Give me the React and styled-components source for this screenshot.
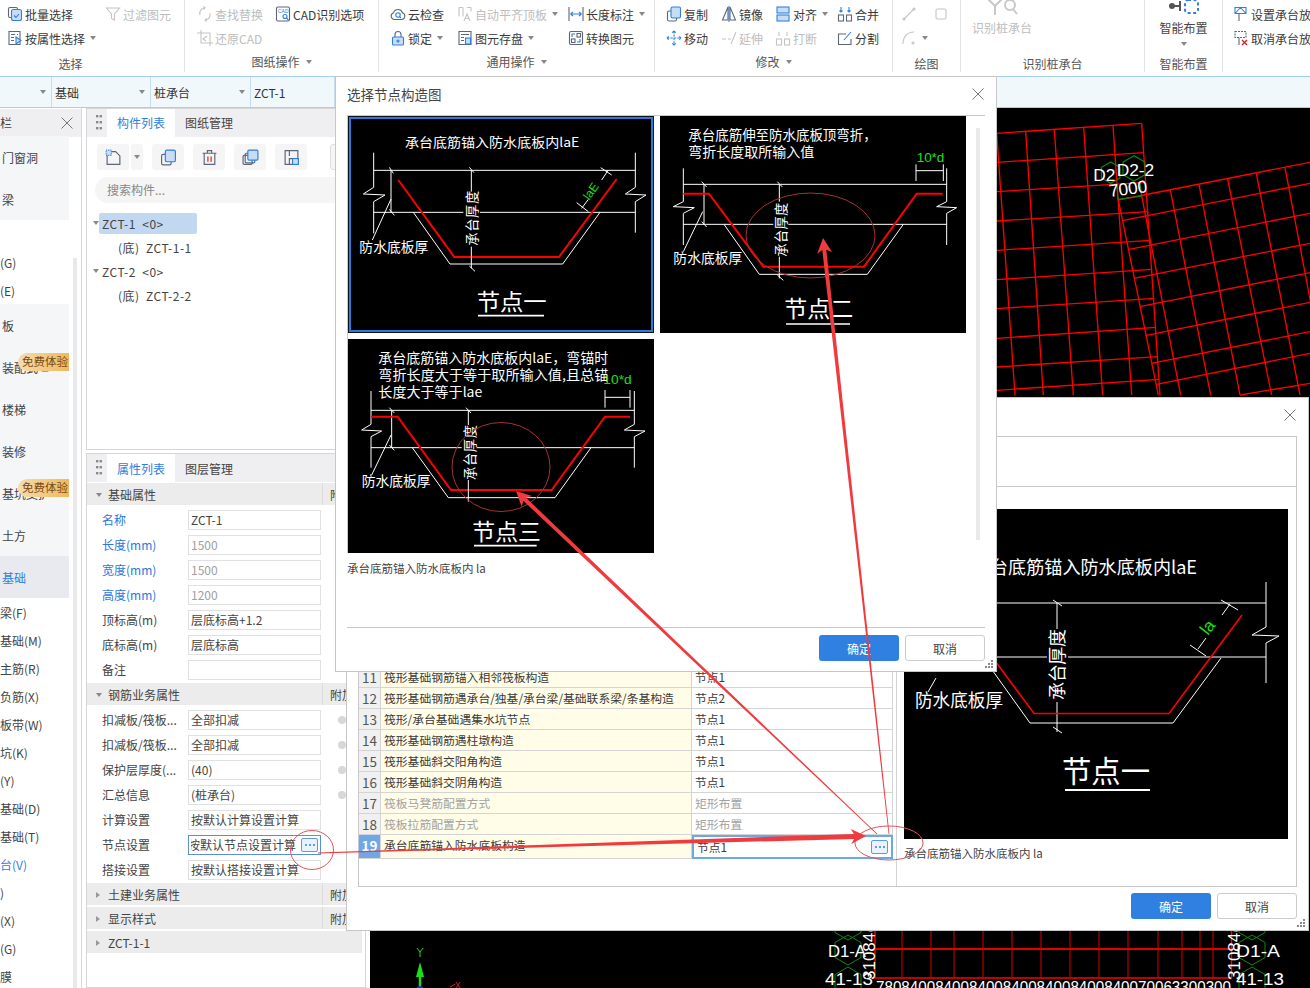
import React from "react";
import styled, { createGlobalStyle } from "styled-components";

const Global = createGlobalStyle`
  html, body { margin: 0; padding: 0; background: #fff; }
  body { font-family: "Noto Sans CJK SC", "Liberation Sans", sans-serif; font-size: 12px; color: #444; }
  * { box-sizing: border-box; }
`;

const Page = styled.div`position: relative; width: 1310px; height: 988px; overflow: hidden; background: #fff;`;

/* ---------- icons ---------- */
const GlyphSvg = styled.svg`
  flex: none; fill: none; stroke: ${p => (p.$off ? "#c4c4c4" : "#5c6678")}; stroke-width: 1.1;
  .b { stroke: ${p => (p.$off ? "#c4c4c4" : "#2f80e0")}; }
  .bf { fill: ${p => (p.$off ? "#eee" : "#c9dcf5")}; stroke: ${p => (p.$off ? "#c4c4c4" : "#2f80e0")}; }
  .r { stroke: #e02020; }
`;
const ICONS = {
  batch: <><rect x="1.5" y="1.5" width="9" height="10" rx="1.5" /><rect className="bf" x="4.5" y="3.5" width="10" height="11" rx="2" /><path className="b" d="M7 9.5l2 2 3-3.5" /></>,
  filter: <path d="M1.5 2h13l-5 6v6l-3-1.5V8z" />,
  attr: <><path d="M2 1.5h11v13H2z" /><path d="M4 4.5h4M4 7.5h3M4 10.5h3M10 4.5h1" /><path className="bf" d="M9 7l5 3.5-5 3.5z" /></>,
  replace: <><path d="M3 9a5.5 5.5 0 0 1 4-7l1-.3M13 7a5.5 5.5 0 0 1-4 7l-1 .3" /><path d="M6 .5l2 1.2-1.5 2M10 15.5l-2-1.2 1.5-2" /></>,
  cad: <><rect x="1.5" y="1" width="13" height="14" rx="1.5" /><text x="3" y="7" fontSize="5" fill="#2f80e0" stroke="none" fontFamily="Liberation Sans">CAD</text><circle className="b" cx="10" cy="10.5" r="2" /><path className="b" d="M11.5 12l2 2" /></>,
  restore: <><path d="M4 0v13h12M0 3h13v13" /><path d="M10 6l-4 3 3 2" /></>,
  cloud: <><path d="M4.5 13.5a3.5 3.5 0 0 1-1-6.8 4.8 4.8 0 0 1 9 0 3.5 3.5 0 0 1-1 6.8z" /><circle className="b" cx="8" cy="9" r="2.2" /><path className="b" d="M9.6 10.6l1.4 1.4" /></>,
  flush: <><path d="M2 1.5v9M6 1.5v9M2 1.5h4M10 1.5h4M14 1.5v4" /><path d="M7 15l3-7 3 7M8.2 12.5h3.6" /></>,
  dim: <><path d="M1 1v14M15 1v14" /><path className="b" d="M2.5 8h11M2.5 8l2.5-2M2.5 8l2.5 2M13.5 8L11 6M13.5 8L11 10" /></>,
  lock: <><path d="M5 7V4.5a3 3 0 0 1 6 0V7" /><rect className="bf" x="2.5" y="7" width="11" height="8" rx="1" /><circle className="b" cx="8" cy="11" r="1" /></>,
  save: <><path d="M2 1.5h12v13H2z" /><path d="M4 4.5h8M4 7.5h3M4 10.5h3" /><rect className="bf" x="8.5" y="8" width="5" height="6" /></>,
  convert: <><rect x="1.5" y="1.5" width="13" height="13" rx="1.5" /><rect x="9" y="3.5" width="3.5" height="3.5" /><rect x="3.5" y="9" width="3.5" height="3.5" /><path className="b" d="M4 7V4h3M12 9v3H9" /></>,
  copy: <><rect x="1.5" y="5" width="9" height="10" rx="1.5" /><rect className="bf" x="5" y="1" width="9.5" height="11" rx="1.5" /></>,
  mirror: <><path d="M7 1L1.5 14H7zM9 1l5.5 13H9z" /><path className="b" d="M8 0v16" /></>,
  alignv: <><rect className="bf" x="2" y="1" width="12" height="6" /><rect className="bf" x="2" y="9" width="12" height="6" /></>,
  merge: <><rect x="1.5" y="9" width="5" height="6" /><rect x="9.5" y="9" width="5" height="6" /><path className="b" d="M4 1v5M2.5 4.5L4 6l1.5-1.5M12 1v5M10.5 4.5L12 6l1.5-1.5" /></>,
  move: <path className="b" d="M8 1v14M1 8h14M8 1L6 3M8 1l2 2M8 15l-2-2M8 15l2-2M1 8l2-2M1 8l2 2M15 8l-2-2M15 8l-2 2" strokeDasharray="2.4 1" />,
  extend: <path d="M1 9h4M7 9h3M10 14L15 2" />,
  break: <><rect x="1.5" y="9" width="5" height="6" /><rect x="9.5" y="9" width="5" height="6" /><path d="M4 2v4M12 2v4" /></>,
  split: <><path d="M14 9v5.5H1.5V4H9" /><path className="b" d="M7 10l7-8" /></>,
  line: <><path d="M3 13L13 3" /><circle cx="3" cy="13" r="1" /><circle cx="13" cy="3" r="1" /></>,
  rect: <rect x="3" y="3" width="10" height="10" rx="1.5" />,
  arc: <><path d="M2 14C2 7 6 2 13 2" /><circle cx="12" cy="13" r="1" /></>,
  setup: <><path className="b" d="M2 1.5h11v6H2zM2 7.5L7.5 1.5 13 7.5" /><path d="M6 7.5V15" /></>,
  cancel: <><path d="M2 1.5h11v6H2z" strokeDasharray="2 1" /><path d="M6 7.5V15" /><path className="r" d="M9 10l5 5M14 10l-5 5" strokeWidth="1.4" /></>,
  newdoc: <><path d="M2 2.5h8l4 4v8H2z" /><rect className="bf" x="1" y="1" width="5" height="5" strokeDasharray="1 1" /></>,
  trash: <><path d="M3 4h10v10.5H3zM1.5 4h13M6 4V1.5h4V4" /><path className="r" d="M6.5 7v5M9.5 7v5" /></>,
  layers: <><rect x="1" y="6" width="8.5" height="8.5" rx="1" /><rect x="3" y="4" width="9" height="9" rx="1" /><rect className="bf" x="5.5" y="1" width="9.5" height="9.5" rx="1" /></>,
  store: <><path d="M2 1.5h12v13H2zM6 1.5v5M6 14.5V9h3" /><rect className="bf" x="9" y="9" width="5.5" height="5.5" /></>,
};
const Glyph = ({ name, size = 16, off }) => (
  <GlyphSvg width={size} height={size} viewBox="0 0 16 16" $off={off}>{ICONS[name]}</GlyphSvg>
);

const Caret = styled.i`
  display: inline-block; flex: none; width: 0; height: 0; margin-left: ${p => p.$ml ?? 4}px;
  border-left: 3px solid transparent; border-right: 3px solid transparent;
  border-top: 4px solid ${p => p.$c || "#888"};
`;
const SideCaret = styled.i`
  display: inline-block; flex: none; width: 0; height: 0; margin-right: 2px;
  border-top: 3px solid transparent; border-bottom: 3px solid transparent; border-left: 4px solid #999;
`;

/* ---------- ribbon ---------- */
const Ribbon = styled.header`display: flex; height: 76px; background: #fff; overflow: hidden;`;
const Group = styled.section`
  flex: none; width: ${p => p.$w}px; height: 72px; display: flex; flex-direction: column;
  border-right: 1px solid #e3e3e3;
`;
const GroupBody = styled.div`
  display: grid; grid-template-columns: ${p => p.$cols}; grid-auto-rows: 24px;
  padding: 2px 0 0 ${p => p.$pl}px; height: 51px; white-space: nowrap;
`;
const StackBody = styled.div`
  display: flex; flex-direction: column; align-items: ${p => p.$align || "center"}; height: 51px; padding-left: ${p => p.$pl || 0}px;
  color: ${p => (p.$off ? "#bdbdbd" : "#444")}; white-space: nowrap;
`;
const StackIcon = styled.svg`flex: none; margin: 0 0 4px ${p => p.$ml || 0}px; fill: none; stroke: ${p => p.$c}; stroke-width: 2;`;
const StackCaret = styled(Caret)`margin: 6px 0 0;`;
const GroupLabel = styled.div`
  height: 21px; display: flex; align-items: center; justify-content: center;
  padding-right: ${p => p.$pr || 0}px; color: #555; transform: translateY(${p => p.$dy ?? 2}px);
`;
const Tool = styled.div`
  display: flex; align-items: center; gap: 2px; color: ${p => (p.$off ? "#bdbdbd" : "#3a3a3a")};
`;

const T = ({ icon, off, caret, children }) => (
  <Tool $off={off}><Glyph name={icon} off={off} />{children && <span>{children}</span>}{caret && <Caret $ml={3} />}</Tool>
);

/* ---------- filter bar ---------- */
const FilterBar = styled.div`
  display: flex; height: 32px; background: #f0f8fc;
  border-top: 1px solid #a6cdf2; border-bottom: 1px solid #a6cdf2;
`;
const FilterCell = styled.div`
  width: ${p => p.$w}px; flex: none; display: flex; align-items: center; justify-content: space-between;
  padding: 0 5px 0 3px; border-right: 1px solid #c8dcec; color: #333;
`;

/* ---------- main ---------- */
const Main = styled.main`display: flex; height: 880px;`;
const Sidebar = styled.aside`flex: none; width: 82px; margin-right: 4px; border-right: 1px solid #d8d8d8; overflow: hidden;`;
const SideHead = styled.div`
  height: 28px; margin-top: 1px; background: #efeff1; display: flex; align-items: center; justify-content: space-between;
  padding: 0 8px 1px 0; color: #444;
`;
const SideBody = styled.div`display: flex;`;
const SideList = styled.div`width: 69px; flex: none; transform: translateY(-1px);`;
const SideTrack = styled.div`width: 4px; margin: 121px 0 0 4px; height: 730px; background: #e9e9e9;`;
const SideItem = styled.div`
  position: relative; height: ${p => (p.$main ? 42 : 28)}px; display: flex; align-items: center; gap: 2px; white-space: nowrap;
  padding-left: ${p => (p.$main ? 2 : 0)}px;
  background: ${p => (p.$sel ? "#e8eaef" : p.$main ? "#f5f6f8" : "#fff")};
  color: ${p => (p.$blue ? "#2f80e0" : "#444")};
`;
const Badge = styled.span`
  position: absolute; right: 0; top: 7px; width: 51px; height: 18px; border-radius: 9px 0 0 9px;
  background: linear-gradient(90deg, #f6dcae, #eeb95c); color: #7a4a12; font-size: 11.5px; line-height: 17px; text-align: right; padding-right: 1px;
`;

const Panels = styled.div`flex: none; width: 280px; margin-right: 4px; display: flex; flex-direction: column; gap: 3px;`;
const Panel = styled.section`
  flex: ${p => (p.$grow ? "1" : "none")}; height: ${p => p.$h || "auto"}; border: 1px solid #d6d6d6; overflow: hidden; background: #fff;
`;
const Tabs = styled.div`height: 28px; display: flex; background: #efeff1;`;
const Grip = styled.svg`flex: none; margin: 6px 5px 0 9px; fill: #8a8a8a;`;
const Tab = styled.div`
  width: 68px; display: flex; align-items: center; padding: ${p => (p.$low ? "1px 0 0" : "0 0 1px")} 10px;
  background: ${p => (p.$on ? "#fff" : "transparent")}; color: ${p => (p.$on ? "#2f80e0" : "#444")};
`;
const GripDots = () => (
  <Grip width="6" height="15" viewBox="0 0 6 15">
    {[0, 6, 12].map(y => <React.Fragment key={y}><rect x="0" y={y} width="2.4" height="2.4" /><rect x="3.6" y={y} width="2.4" height="2.4" /></React.Fragment>)}
  </Grip>
);
const Toolbar = styled.div`display: flex; padding: 7px 0 0 10px; gap: 9px;`;
const ToolBtn = styled.div`
  flex: none; width: ${p => p.$w || 32}px; height: 26px; border-radius: 3px; background: #f5f5f5; display: flex; align-items: center; justify-content: center;
  margin-left: ${p => p.$ml || 0}px; border: ${p => (p.$outline ? "1px solid #ddd" : "none")};
`;
const Search = styled.div`
  height: 26px; margin: 7px 0 0 8px; border-radius: 13px; background: #f5f5f5; color: #888; padding-left: 12px; line-height: 26px; width: 300px;
`;
const Tree = styled.div`margin-top: 8px; letter-spacing: .5px;`;
const TreeRow = styled.div`
  height: 24px; display: flex; align-items: center; padding-left: ${p => p.$pl}px; color: #444; white-space: pre;
`;
const TreeLabel = styled.span`
  display: flex; align-items: center; width: 98px; height: 21px; padding-left: 3px; border-radius: 2px; white-space: pre;
  background: ${p => (p.$sel ? "#c2d8f0" : "transparent")};
`;

const Section = styled.div`
  height: 22px; margin: ${p => p.$mt ?? 1}px ${p => (p.$last ? 3 : 0)}px 2px 0; background: #ececec; display: flex; align-items: center; color: #444;
`;
const SectionName = styled.div`
  width: 235px; flex: none; display: flex; align-items: center; gap: 6px; padding: 1px 0 0 9px;
`;
const SectionExtra = styled.div`
  flex: 1; height: 100%; line-height: 23px; padding-left: 7px; border-left: 1px solid #dcdcdc; white-space: nowrap;
`;
const PropRow = styled.div`height: 25px; display: flex; align-items: center; padding-left: 15px;`;
const PropLabel = styled.div`width: 86px; flex: none; color: ${p => (p.$blue ? "#2878e0" : "#444")}; white-space: nowrap;`;
const Field = styled.div`
  width: 133px; height: 20px; flex: none; display: flex; align-items: center; padding: 0 2px;
  border: 1px solid ${p => (p.$on ? "#5a8fd8" : "#e0e0e0")}; color: ${p => (p.$dim ? "#a0a0a0" : "#444")}; overflow: hidden; white-space: nowrap;
`;
const FieldText = styled.span`flex: 1; min-width: 0; overflow: hidden; text-indent: ${p => (p.$shift ? -3 : 0)}px;`;
const Radio = styled.i`width: 8px; height: 8px; border-radius: 50%; background: #d8d8d8; margin-left: 17px; flex: none;`;
const MoreBtn = styled.span`
  flex: none; width: 17px; height: 14px; border: 1px solid #5a9ae8; border-radius: 2px; background: #eaf2fc;
  display: flex; align-items: center; justify-content: center; gap: 2px; margin-left: 2px;
  & > b { width: 2px; height: 2px; background: #2f80e0; border-radius: 50%; }
`;
const More = () => <MoreBtn><b /><b /><b /></MoreBtn>;

/* ---------- canvas ---------- */
const Canvas = styled.div`flex: 1; background: #000; overflow: hidden;`;
const CanvasSvg = styled.svg`
  display: block; fill: none;
  text { fill: #fff; stroke: none; font-family: "Liberation Sans", sans-serif; }
`;

/* ---------- dialogs ---------- */
const DialogBack = styled.div`
  position: absolute; left: 346px; top: 397px; width: 963px; height: 534px; background: #fff; border: 1px solid #c6c6c6; z-index: 10;
  display: flex; flex-direction: column;
`;
const DialogFront = styled.div`
  position: absolute; left: 335px; top: 76px; width: 662px; height: 596px; background: #fff; border: 1px solid #c6c6c6; z-index: 11;
  display: flex; flex-direction: column;
`;
const DialogHead = styled.div`
  height: 38px; flex: none; display: flex; align-items: center; justify-content: space-between; padding: 0 12px 4px 11px;
  font-size: 13.5px; color: #444;
`;
const CloseSvg = styled.svg`stroke: #777; fill: none; stroke-width: 1; flex: none;`;
const Close = () => <CloseSvg width="12" height="12" viewBox="0 0 12 12"><path d="M.5.5l11 11M11.5.5l-11 11" /></CloseSvg>;
const FrontFrame = styled.div`
  height: 513px; flex: none; margin: 0 11px; display: flex; border-top: 1px solid #c8c8c8; border-bottom: 1px solid #c8c8c8;
`;
const FrontLeft = styled.div`flex: none; width: 619px;`;
const NodeGrid = styled.div`
  display: grid; grid-template-columns: 306px 306px; gap: 6px; border-left: 1px solid #c8c8c8;
`;
const NodeCell = styled.div`position: relative; height: ${p => p.$h}px; overflow: hidden; background: #000;`;
const SelRing = styled.div`position: absolute; inset: 0; border: 3px solid #2b7bdc; outline: 1px solid #111; outline-offset: -1px;`;
const Caption = styled.div`margin-top: ${p => p.$mt}px; line-height: 16px; font-size: 11.5px; color: #444; white-space: nowrap;`;
const FrontTrack = styled.div`flex: none; width: 4px; height: 412px; margin: 12px 0 0 10px; background: #eaeaea;`;
const Foot = styled.div`
  flex: 1; display: flex; justify-content: flex-end; gap: 6px; padding: ${p => p.$pt}px 11px 0 0;
`;
const Btn = styled.div`
  width: 80px; height: 26px; border-radius: 3px; display: flex; align-items: center; justify-content: center;
  background: ${p => (p.$primary ? "#2f80e0" : "#fff")}; color: ${p => (p.$primary ? "#fff" : "#444")};
  border: ${p => (p.$primary ? "none" : "1px solid #ccc")};
`;
const ResizeGrip = styled.svg`position: absolute; right: 3px; bottom: 3px; fill: #8a8a8a;`;
const Resize = () => (
  <ResizeGrip width="8" height="8" viewBox="0 0 8 8">
    <rect x="6" y="0" width="2" height="2" /><rect x="3" y="3" width="2" height="2" /><rect x="6" y="3" width="2" height="2" />
    <rect x="0" y="6" width="2" height="2" /><rect x="3" y="6" width="2" height="2" /><rect x="6" y="6" width="2" height="2" />
  </ResizeGrip>
);

const BackFrame = styled.div`
  flex: none; height: 451px; margin: 0 11px; border: 1px solid #c8c8c8; display: flex; flex-direction: column;
`;
const BackBar = styled.div`height: 50px; flex: none; border-bottom: 1px solid #c8c8c8;`;
const BackBody = styled.div`flex: 1; display: flex; min-height: 0;`;
const LeftPane = styled.div`
  width: 538px; flex: none; border-right: 1px solid #d4d4d4; display: flex; flex-direction: column; justify-content: flex-end;
  padding: 0 3px 30px 0;
`;
const Row = styled.div`
  display: grid; grid-template-columns: 22px 311px 201px; height: 21px; line-height: 20px; font-size: 11.8px;
  color: ${p => (p.$dim ? "#a2a2a2" : "#3a3a3a")}; white-space: nowrap;
`;
const IdxCell = styled.div`
  text-align: center; font-size: 13.5px; background: ${p => (p.$sel ? "#6fa8e8" : "#f0f0f0")}; color: ${p => (p.$sel ? "#fff" : "#555")};
  font-weight: ${p => (p.$sel ? 700 : 400)}; border-right: 1px solid #d4d4d4; border-bottom: 1px solid #d4d4d4;
`;
const NameCell = styled.div`padding-left: 3px; background: #fffde8; border-right: 1px solid #d4d4d4; border-bottom: 1px solid #d4d4d4; overflow: hidden;`;
const ValCell = styled.div`
  padding-left: 3px; display: flex; align-items: center; justify-content: space-between;
  border: ${p => (p.$sel ? "2px solid #6aa8e6" : "none")}; border-right: ${p => (p.$sel ? "2px solid #6aa8e6" : "1px solid #d4d4d4")};
  border-bottom: ${p => (p.$sel ? "2px solid #6aa8e6" : "1px solid #d4d4d4")}; padding-right: 3px;
`;
const RightPane = styled.div`flex: 1; padding: 22px 0 0 7px;`;

const Overlay = styled.svg`position: absolute; left: 0; top: 0; z-index: 12; pointer-events: none;`;

/* ---------- CAD drawings ---------- */
const CadSvg = styled.svg`
  display: block; fill: none; stroke: #fff; background: #000;
  text { fill: #fff; stroke: none; font-family: "Noto Sans CJK SC", sans-serif; }
  .g { fill: #19e019; font-family: "Liberation Sans", sans-serif; }
`;
const W = ({ p, w = 3 }) => <polyline points={p} stroke="#fff" strokeWidth={w} fill="none" />;
const R = ({ p, w = 6 }) => <polyline points={p} stroke="#f00" strokeWidth={w} fill="none" />;
const Cad = ({ size, text, x, y, w, cls }) => (
  <text x={x} y={y} fontSize={size} className={cls} textLength={w} lengthAdjust="spacingAndGlyphs">{text}</text>
);

const Node1 = () => (
  <CadSvg width="306" height="217" viewBox="24 108 918 651">
    <Cad size={38} x={195} y={202} w={523} text="承台底筋锚入防水底板内laE" />
    <W p="101,218 101,322 70,342 135,345 101,365 101,460" />
    <W p="886,218 886,322 856,342 918,345 886,365 886,458" />
    <W p="101,271 886,271" /><W p="101,397 370,397" /><W p="420,397 886,397" />
    <W p="153,271 153,397" /><W p="148,262 160,280" /><W p="148,388 163,406" /><W p="153,357 97,480" />
    <W p="220,397 330,552 668,552 780,397" />
    <R p="175,300 343,531 657,531 830,297" />
    <W p="394,271 394,335" /><W p="394,500 394,565" /><W p="388,262 402,278" /><W p="388,558 405,574" />
    <text x={412} y={497} fontSize={40} transform="rotate(-90 412 497)" textLength={165}>承台厚度</text>
    <W p="725,385 745,358" /><W p="785,300 805,270" /><W p="710,368 745,395" /><W p="782,263 815,285" />
    <text x={748} y={362} fontSize={36} className="g" transform="rotate(-55 748 362)">laE</text>
    <Cad size={41} x={58} y={515} w={207} text="防水底板厚" />
    <Cad size={68} x={410} y={690} w={210} text="节点一" />
    <W p="414,707 612,707" w={5} />
  </CadSvg>
);
const Node2 = () => (
  <CadSvg width="306" height="217" viewBox="15 33 918 651">
    <Cad size={42} x={100} y={105} w={565} text="承台底筋伸至防水底板顶弯折，" />
    <Cad size={42} x={100} y={155} w={378} text="弯折长度取所输入值" />
    <Cad size={36} x={785} y={170} w={83} cls="g" text="10*d" />
    <W p="783,197 865,197" /><W p="783,178 783,228" /><W p="865,178 865,228" />
    <W p="85,190 85,290 55,305 118,308 85,325 85,420" />
    <W p="875,190 875,290 845,305 905,308 875,325 875,420" />
    <W p="85,238 875,238" /><W p="85,358 355,358" /><W p="400,358 875,358" />
    <W p="147,238 147,358" /><W p="140,230 155,246" /><W p="140,350 155,366" /><W p="143,320 85,440" />
    <W p="207,358 313,508 637,508 745,358" />
    <R p="85,266 162,266 325,485 627,485 785,266 863,266" />
    <W p="373,238 373,290" /><W p="373,455 373,520" /><W p="367,230 382,246" /><W p="367,510 385,526" />
    <text x={394} y={455} fontSize={40} transform="rotate(-90 394 455)" textLength={162}>承台厚度</text>
    <Cad size={41} x={55} y={475} w={207} text="防水底板厚" />
    <Cad size={68} x={388} y={635} w={207} text="节点二" />
    <W p="393,657 585,657" w={5} />
  </CadSvg>
);
const Node3 = () => (
  <CadSvg width="306" height="214" viewBox="24 12 918 642">
    <Cad size={40} x={115} y={85} w={690} text="承台底筋锚入防水底板内laE，弯锚时" />
    <Cad size={40} x={115} y={135} w={690} text="弯折长度大于等于取所输入值,且总锚" />
    <Cad size={40} x={115} y={185} w={312} text="长度大于等于lae" />
    <Cad size={36} x={790} y={148} w={85} cls="g" text="10*d" />
    <W p="795,187 870,187" /><W p="795,165 795,218" /><W p="870,165 870,218" />
    <W p="93,168 93,268 65,285 125,288 93,305 93,398" />
    <W p="883,168 883,268 853,285 915,288 883,305 883,398" />
    <W p="93,226 883,226" /><W p="93,338 365,338" /><W p="410,338 883,338" />
    <W p="155,226 155,338" /><W p="148,218 163,234" /><W p="148,330 163,346" /><W p="153,300 95,420" />
    <W p="217,338 325,488 645,488 753,338" />
    <R p="93,245 173,245 333,465 635,465 795,245 870,245" />
    <W p="385,226 385,270" /><W p="385,435 385,500" /><W p="378,218 393,234" />
    <text x={404} y={435} fontSize={40} transform="rotate(-90 404 435)" textLength={165}>承台厚度</text>
    <Cad size={41} x={65} y={452} w={207} text="防水底板厚" />
    <Cad size={68} x={397} y={615} w={206} text="节点三" />
    <W p="402,632 590,632" w={5} />
  </CadSvg>
);
const BigNode = () => (
  <CadSvg width="384" height="330" viewBox="904 509 384 330">
    <Cad size={18} x={990} y={574} w={207} text="台底筋锚入防水底板内laE" />
    <W p="904,603 1266,603" w={1} /><W p="904,657 1047,657" w={1} /><W p="1068,657 1266,657" w={1} />
    <W p="1266,582 1266,627 1252,635 1279,636 1266,643 1266,683" w={1} />
    <W p="1057,603 1057,629" w={1} /><W p="1057,702 1057,732" w={1} /><W p="1053,600 1062,606" w={1} /><W p="1053,727 1062,733" w={1} />
    <W p="1230,604 1222,615" w={1} /><W p="1206,638 1198,649" w={1} /><W p="1221,600 1238,610" w={1} /><W p="1190,645 1206,656" w={1} />
    <W p="936,678 928,692" w={1} />
    <W p="985,660 1030,723 1173,723 1221,658" w={1} />
    <R p="950,600 1034,713.5 1169,713.5 1242,615" w={1.6} />
    <text x={1208} y={636} fontSize={17} className="g" transform="rotate(-52 1208 636)">la</text>
    <text x={1064} y={700} fontSize={18} transform="rotate(-90 1064 700)" textLength={71}>承台厚度</text>
    <Cad size={18} x={915} y={707} w={88} text="防水底板厚" />
    <Cad size={30} x={1062} y={782} w={88} text="节点一" />
    <W p="1065,790 1150,790" w={2} />
  </CadSvg>
);

/* ---------- canvas drawing ---------- */
const gridLines = [
  [20,100,75,885],[107,95,160,885],[193,90,250,885],[281,83,338,885],[369,77,425,885],[455,70,510,885],
  [20,100,455,70],[20,187,462,158],[20,275,468,247],[20,363,475,335],[20,451,481,421],[20,539,487,508],[20,626,493,595],[20,715,498,682],[20,801,503,770],[20,871,508,838],
  [385,300,960,187],[397,362,960,250],[414,449,960,340],[432,535,960,430],[449,620,960,518],[466,707,960,607],[484,790,960,695],[500,853,960,760],[750,885,960,850],
  [385,300,505,885],[455,288,572,885],[541,270,662,885],[627,253,750,885],[713,237,845,885],[799,220,930,885],[885,203,1015,885],
];
const hex = (cx, cy, r) => Array.from({ length: 6 }, (_, i) => {
  const a = Math.PI / 3 * i + Math.PI / 6;
  return `${cx + r * Math.cos(a)},${cy + r * Math.sin(a)}`;
}).join(" ");
const bottomXs = [902, 931, 954, 983, 1012, 1041, 1070, 1099, 1128, 1158, 1182, 1200, 1213];

const CanvasArt = () => (
  <CanvasSvg width="940" height="880" viewBox="370 108 940 880">
    <g transform="translate(990 100) scale(.3333)" stroke="#f00" strokeWidth="4">
      {gridLines.map((l, i) => <line key={i} x1={l[0]} y1={l[1]} x2={l[2]} y2={l[3]} />)}
      <polygon points={hex(362, 218, 32)} stroke="#0b8a0b" strokeWidth="3.5" />
      <polygon points={hex(432, 205, 38)} stroke="#0b8a0b" strokeWidth="3.5" />
      <polyline points="380,250 384,298 455,288 450,250" stroke="#0b8a0b" strokeWidth="3.5" />
      <text x={310} y={242} fontSize={52}>D2</text>
      <text x={380} y={228} fontSize={52}>D2-2</text>
      <text x={356} y={284} fontSize={52} transform="rotate(-7 412 262)">7000</text>
    </g>
    <path d="M875 931V978H1231.5V931" stroke="#f00" strokeWidth="1.4" />
    <line x1="875" y1="949" x2="1231" y2="949" stroke="#e00000" strokeWidth="2" />
    {bottomXs.map(x => <line key={x} x1={x} y1="931" x2={x} y2="978" stroke="#e00000" strokeWidth="1" />)}
    {[[848, 950], [848, 982], [1252, 950], [1252, 982], [848, 925], [1252, 925]].map(([x, y]) => (
      <polygon key={`${x}${y}`} points={hex(x, y, 15)} stroke="#0b8a0b" strokeWidth="1" />
    ))}
    <text x={828} y={957} fontSize={17} textLength={38} lengthAdjust="spacingAndGlyphs">D1-A</text>
    <text x={825} y={985} fontSize={17} textLength={48} lengthAdjust="spacingAndGlyphs">41-13</text>
    <text x={1236} y={957} fontSize={17} textLength={44} lengthAdjust="spacingAndGlyphs">D1-A</text>
    <text x={1236} y={985} fontSize={17} textLength={48} lengthAdjust="spacingAndGlyphs">41-13</text>
    <text x={875} y={980} fontSize={17} transform="rotate(-90 875 980)">31084@</text>
    <text x={1240} y={980} fontSize={17} transform="rotate(-90 1240 980)">31084@</text>
    <text x={876} y={993} fontSize={17} textLength={355} lengthAdjust="spacingAndGlyphs">780840084008400840084008400840070063300300</text>
    <path d="M420 977V988" stroke="#19e019" strokeWidth="2.5" />
    <path d="M420 962l-4 15h8z" fill="#19e019" />
    <path d="M417 948l3 4 3-4M420 952v5" stroke="#19e019" strokeWidth="1" />
    <circle cx="420" cy="990" r="4" fill="#1a2ad0" />
    <path d="M450 987l5-3 M456 982l4 6M460 982l-4 6" stroke="#d02020" strokeWidth="1" />
  </CanvasSvg>
);

/* ---------- annotation overlay ---------- */
const arrow = (tx, ty, hx, hy, neck = 4, hl = 15, hw = 7.5) => {
  const d = Math.hypot(hx - tx, hy - ty), ux = (hx - tx) / d, uy = (hy - ty) / d, nx = -uy, ny = ux;
  const p = (x, y) => `${x.toFixed(1)},${y.toFixed(1)}`;
  const nk = [hx - ux * (hl - 3), hy - uy * (hl - 3)];
  const b = [hx - ux * hl, hy - uy * hl];
  return [
    p(tx + nx * .4, ty + ny * .4), p(nk[0] + nx * neck / 2, nk[1] + ny * neck / 2), p(b[0] + nx * hw, b[1] + ny * hw),
    p(hx, hy), p(b[0] - nx * hw, b[1] - ny * hw), p(nk[0] - nx * neck / 2, nk[1] - ny * neck / 2), p(tx - nx * .4, ty - ny * .4),
  ].join(" ");
};

const Annotations = () => (
  <Overlay width="1310" height="988" viewBox="0 0 1310 988">
    <ellipse cx="312" cy="850" rx="21.5" ry="19.5" fill="none" stroke="#e0555a" strokeWidth="1" />
    <ellipse cx="889" cy="843" rx="34" ry="17" fill="none" stroke="#e0555a" strokeWidth="1" />
    <ellipse cx="810.5" cy="235.5" rx="64.5" ry="42.5" fill="none" stroke="#a83232" strokeWidth="1" />
    <ellipse cx="501" cy="467" rx="49" ry="44.5" fill="none" stroke="#a83232" strokeWidth="1" />
    <polygon points={arrow(318, 853, 866, 836, 5)} fill="#f03a3e" />
    <polygon points={arrow(889, 834, 823, 238)} fill="#f03a3e" />
    <polygon points={arrow(877, 834, 516, 491)} fill="#f03a3e" />
  </Overlay>
);

/* ---------- data ---------- */
const sideItems = [
  { t: "门窗洞", main: 1 }, { t: "梁", main: 1 }, { t: "" }, { t: "(G)" }, { t: "(E)" },
  { t: "板", main: 1 }, { t: "装配式", main: 1, badge: 1, lock: 1 }, { t: "楼梯", main: 1 }, { t: "装修", main: 1 },
  { t: "基坑支护", main: 1, badge: 1 }, { t: "土方", main: 1 }, { t: "基础", main: 1, sel: 1, blue: 1 },
  { t: "梁(F)" }, { t: "基础(M)" }, { t: "主筋(R)" }, { t: "负筋(X)" }, { t: "板带(W)" }, { t: "坑(K)" }, { t: "(Y)" },
  { t: "基础(D)" }, { t: "基础(T)" }, { t: "台(V)", blue: 1 }, { t: ")" }, { t: "(X)" }, { t: "(G)" }, { t: "膜" },
];
const baseProps = [
  ["名称", "ZCT-1", 1], ["长度(mm)", "1500", 1, 1], ["宽度(mm)", "1500", 1, 1], ["高度(mm)", "1200", 1, 1],
  ["顶标高(m)", "层底标高+1.2"], ["底标高(m)", "层底标高"], ["备注", ""],
];
const rebarProps = [
  ["扣减板/筏板...", "全部扣减", 0, 0, 1], ["扣减板/筏板...", "全部扣减", 0, 0, 1], ["保护层厚度(...", "(40)", 0, 0, 1], ["汇总信息", "(桩承台)", 0, 0, 1],
  ["计算设置", "按默认计算设置计算"], ["节点设置", "按默认节点设置计算", 0, 0, 0, 1], ["搭接设置", "按默认搭接设置计算"],
];
const tableRows = [
  [11, "筏形基础钢筋锚入相邻筏板构造", "节点1"],
  [12, "筏形基础钢筋遇承台/独基/承台梁/基础联系梁/条基构造", "节点2"],
  [13, "筏形/承台基础遇集水坑节点", "节点1"],
  [14, "筏形基础钢筋遇柱墩构造", "节点1"],
  [15, "筏形基础斜交阳角构造", "节点1"],
  [16, "筏形基础斜交阴角构造", "节点1"],
  [17, "筏板马凳筋配置方式", "矩形布置", 1],
  [18, "筏板拉筋配置方式", "矩形布置", 1],
  [19, "承台底筋锚入防水底板构造", "节点1", 0, 1],
];

const Prop = ({ d }) => (
  <PropRow>
    <PropLabel $blue={d[2]}>{d[0]}</PropLabel>
    <Field $dim={d[3]} $on={d[5]}>
      <FieldText $shift={d[5]}>{d[1]}</FieldText>
      {d[5] ? <More /> : null}
    </Field>
    {d[4] ? <Radio /> : null}
  </PropRow>
);

export default function App() {
  return (
    <Page>
      <Global />
      <Ribbon>
        <Group $w={185}>
          <GroupBody $pl={7} $cols="98px auto">
            <T icon="batch">批量选择</T><T icon="filter" off>过滤图元</T>
            <T icon="attr" caret>按属性选择</T>
          </GroupBody>
          <GroupLabel $pr={43}>选择</GroupLabel>
        </Group>
        <Group $w={194}>
          <GroupBody $pl={12} $cols="78px auto">
            <T icon="replace" off>查找替换</T><T icon="cad">CAD识别选项</T>
            <T icon="restore" off>还原CAD</T>
          </GroupBody>
          <GroupLabel $dy={0}>图纸操作<Caret $ml={6} /></GroupLabel>
        </Group>
        <Group $w={276}>
          <GroupBody $pl={11} $cols="67px 111px auto">
            <T icon="cloud">云检查</T><T icon="flush" off caret>自动平齐顶板</T><T icon="dim" caret>长度标注</T>
            <T icon="lock" caret>锁定</T><T icon="save" caret>图元存盘</T><T icon="convert">转换图元</T>
          </GroupBody>
          <GroupLabel $dy={0}>通用操作<Caret $ml={6} /></GroupLabel>
        </Group>
        <Group $w={238}>
          <GroupBody $pl={11} $cols="55px 54px 62px auto">
            <T icon="copy">复制</T><T icon="mirror">镜像</T><T icon="alignv" caret>对齐</T><T icon="merge">合并</T>
            <T icon="move">移动</T><T icon="extend" off>延伸</T><T icon="break" off>打断</T><T icon="split">分割</T>
          </GroupBody>
          <GroupLabel $dy={0}>修改<Caret $ml={6} /></GroupLabel>
        </Group>
        <Group $w={68}>
          <GroupBody $pl={8} $cols="32px auto">
            <T icon="line" off /><T icon="rect" off />
            <T icon="arc" off caret />
          </GroupBody>
          <GroupLabel>绘图</GroupLabel>
        </Group>
        <Group $w={184}>
          <StackBody $off $align="flex-start" $pl={11}>
            <StackIcon width="32" height="15" viewBox="0 0 32 15" $c="#c8c8c8" $ml={14}>
              <path d="M1-2l8 8 8-8M9 6v9" /><circle cx="24" cy="5" r="5" /><path d="M27 9l4 5" />
            </StackIcon>
            <span>识别桩承台</span>
          </StackBody>
          <GroupLabel>识别桩承台</GroupLabel>
        </Group>
        <Group $w={78}>
          <StackBody>
            <StackIcon width="32" height="15" viewBox="0 0 32 15" $c="#2f80e0" $ml={0}>
              <path stroke="#555" d="M1 6h11M12 1v10" /><circle stroke="#555" cx="4" cy="6" r="2" /><rect x="17" y="0" width="13" height="13" rx="3" strokeDasharray="3 2.5" />
            </StackIcon>
            <span>智能布置</span>
            <StackCaret />
          </StackBody>
          <GroupLabel>智能布置</GroupLabel>
        </Group>
        <Group $w={88}>
          <GroupBody $pl={10} $cols="auto">
            <T icon="setup">设置承台放</T>
            <T icon="cancel">取消承台放</T>
          </GroupBody>
        </Group>
      </Ribbon>

      <FilterBar>
        <FilterCell $w={52}><span /><Caret /></FilterCell>
        <FilterCell $w={99}>基础<Caret /></FilterCell>
        <FilterCell $w={100}>桩承台<Caret /></FilterCell>
        <FilterCell $w={84}>ZCT-1</FilterCell>
      </FilterBar>

      <Main>
        <Sidebar>
          <SideHead>栏<Close /></SideHead>
          <SideBody>
            <SideList>
              {sideItems.map((s, i) => (
                <SideItem key={i} $main={s.main} $sel={s.sel} $blue={s.blue}>
                  {s.t}
                  {s.lock ? <Glyph name="lock" size={10} /> : null}
                  {s.badge ? <Badge>免费体验</Badge> : null}
                </SideItem>
              ))}
            </SideList>
            <SideTrack />
          </SideBody>
        </Sidebar>

        <Panels>
          <Panel $h="342px">
            <Tabs><GripDots /><Tab $on>构件列表</Tab><Tab>图纸管理</Tab></Tabs>
            <Toolbar>
              <ToolBtn><Glyph name="newdoc" size={17} /></ToolBtn>
              <ToolBtn $w={12} $ml={-7}><Caret $ml={0} /></ToolBtn>
              <ToolBtn><Glyph name="copy" size={17} /></ToolBtn>
              <ToolBtn><Glyph name="trash" size={17} /></ToolBtn>
              <ToolBtn><Glyph name="layers" size={17} /></ToolBtn>
              <ToolBtn><Glyph name="store" size={17} /></ToolBtn>
              <ToolBtn $outline $ml={14} />
            </Toolbar>
            <Search>搜索构件...</Search>
            <Tree>
              <TreeRow $pl={6}><Caret $ml={0} /><TreeLabel $sel>{"ZCT-1  <0>"}</TreeLabel></TreeRow>
              <TreeRow $pl={31}>{"(底)  ZCT-1-1"}</TreeRow>
              <TreeRow $pl={6}><Caret $ml={0} /><TreeLabel>{"ZCT-2  <0>"}</TreeLabel></TreeRow>
              <TreeRow $pl={31}>{"(底)  ZCT-2-2"}</TreeRow>
            </Tree>
          </Panel>
          <Panel $grow>
            <Tabs><GripDots /><Tab $on $low>属性列表</Tab><Tab $low>图层管理</Tab></Tabs>
            <Section><SectionName><Caret $ml={0} />基础属性</SectionName><SectionExtra>附加</SectionExtra></Section>
            {baseProps.map((d, i) => <Prop key={i} d={d} />)}
            <Section><SectionName><Caret $ml={0} />钢筋业务属性</SectionName><SectionExtra>附加</SectionExtra></Section>
            {rebarProps.map((d, i) => <Prop key={i} d={d} />)}
            <Section><SectionName><SideCaret />土建业务属性</SectionName><SectionExtra>附加</SectionExtra></Section>
            <Section $mt={2}><SectionName><SideCaret />显示样式</SectionName><SectionExtra>附加</SectionExtra></Section>
            <Section $last $mt={2}><SectionName><SideCaret />ZCT-1-1</SectionName></Section>
          </Panel>
        </Panels>

        <Canvas><CanvasArt /></Canvas>
      </Main>

      <DialogBack>
        <DialogHead><span /><Close /></DialogHead>
        <BackFrame>
          <BackBar />
          <BackBody>
            <LeftPane>
              {tableRows.map(r => (
                <Row key={r[0]} $dim={r[3]}>
                  <IdxCell $sel={r[4]}>{r[0]}</IdxCell>
                  <NameCell>{r[1]}</NameCell>
                  <ValCell $sel={r[4]}>{r[2]}{r[4] ? <More /> : null}</ValCell>
                </Row>
              ))}
            </LeftPane>
            <RightPane>
              <BigNode />
              <Caption $mt={6}>承台底筋锚入防水底板内 la</Caption>
            </RightPane>
          </BackBody>
        </BackFrame>
        <Foot $pt={6}><Btn $primary>确定</Btn><Btn>取消</Btn></Foot>
        <Resize />
      </DialogBack>

      <DialogFront>
        <DialogHead>选择节点构造图<Close /></DialogHead>
        <FrontFrame>
          <FrontLeft>
            <NodeGrid>
              <NodeCell $h={217}><Node1 /><SelRing /></NodeCell>
              <NodeCell $h={217}><Node2 /></NodeCell>
              <NodeCell $h={214}><Node3 /></NodeCell>
            </NodeGrid>
            <Caption $mt={7}>承台底筋锚入防水底板内 la</Caption>
          </FrontLeft>
          <FrontTrack />
        </FrontFrame>
        <Foot $pt={7}><Btn $primary>确定</Btn><Btn>取消</Btn></Foot>
        <Resize />
      </DialogFront>

      <Annotations />
    </Page>
  );
}
